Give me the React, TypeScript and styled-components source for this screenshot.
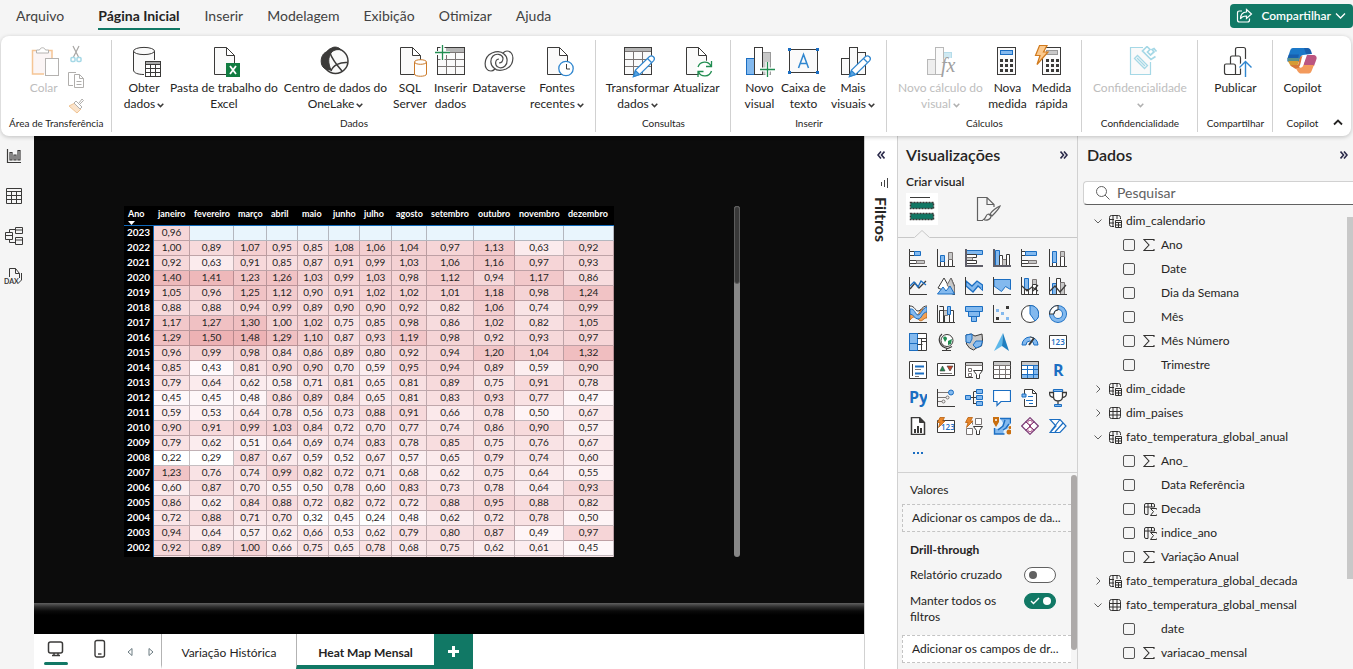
import React from 'react';
import styled, { createGlobalStyle } from 'styled-components';

const GREEN = '#117865';
const INK = '#252423';
const LINE = '#d1d1d1';
const PANE = '#f5f5f5';

const Global = createGlobalStyle`
  * { box-sizing: border-box; }
  body { margin: 0; background: ${PANE}; color: ${INK}; font: 12px/16px Lato, "Open Sans", sans-serif; }
  button, input { font: inherit; color: inherit; }
  button { background: none; border: 0; padding: 0; cursor: pointer; }
  svg { display: block; flex: none; }
`;

/* ---------- shell ---------- */
const Page = styled.div`
  display: flex;
  flex-direction: column;
  height: 100vh;
  min-height: 600px;
  min-width: 1280px;
  overflow: hidden;
`;
const MenuBar = styled.nav`
  display: flex;
  align-items: flex-start;
  height: 36px;
  padding: 4px 0 0 16px;
`;
const MenuItem = styled.button<{ $active?: boolean }>`
  height: 26px;
  margin-right: ${p => (p.$active ? 25 : 24)}px;
  font-size: 14px;
  line-height: 24px;
  color: ${p => (p.$active ? INK : '#424242')};
  font-weight: ${p => (p.$active ? 700 : 400)};
  border-bottom: 2px solid ${p => (p.$active ? GREEN : 'transparent')};
  &:first-child { margin-right: 34px; }
`;
const ShareButton = styled.button`
  display: flex;
  align-items: center;
  gap: 8px;
  height: 24px;
  margin-left: auto;
  padding: 0 7px 0 6px;
  border-radius: 4px;
  background: ${GREEN};
  color: #fff;
  font-weight: 600;
  svg:last-child { margin-left: -4px; }
`;

/* ---------- ribbon ---------- */
const Ribbon = styled.header`
  position: relative;
  z-index: 1;
  display: flex;
  height: 100px;
  flex: none;
  margin: 0 2px 0 1px;
  padding: 4px 0;
  background: #fff;
  border-radius: 8px;
  box-shadow: 0 1px 4px rgba(0, 0, 0, 0.22);
`;
const Group = styled.section`
  display: flex;
  flex-direction: column;
  justify-content: space-between;
  padding: 5px 8px 1px;
  border-right: 1px solid ${LINE};
  &:last-of-type { border-right: 0; }
`;
const GroupRow = styled.div`
  display: flex;
  justify-content: center;
`;
const GroupName = styled.div`
  font-size: 10px;
  line-height: 16px;
  text-align: center;
  white-space: nowrap;
`;
const Tool = styled.button<{ $w: number }>`
  display: flex;
  flex-direction: column;
  align-items: center;
  width: ${p => p.$w}px;
  gap: 3px;
  line-height: 16px;
  white-space: nowrap;
  &:disabled { color: #bdbdbd; }
`;
const ToolLabel = styled.span`
  display: block;
  svg { display: inline-block; margin-left: 2px; }
`;
const SmallTools = styled.div`
  display: flex;
  flex-direction: column;
  gap: 8px;
  padding: 0 2px 0 7px;
`;
const Collapse = styled.button`
  align-self: flex-end;
  margin: 0 8px 6px auto;
`;

/* ---------- workspace ---------- */
const Workspace = styled.div`
  flex: 1;
  min-height: 0;
  display: grid;
  grid-template-columns: 34px minmax(0, 1fr) 33px 181px 275px;
`;
const Rail = styled.nav`
  display: flex;
  flex-direction: column;
  gap: 20px;
  padding: 10px 0 0 3px;
`;
const RailButton = styled.button`
  width: 22px;
  height: 20px;
  display: grid;
  place-items: center;
`;
const Report = styled.main`
  display: flex;
  flex-direction: column;
  min-width: 0;
  min-height: 0;
`;
const Canvas = styled.div`
  flex: 1;
  min-height: 0;
  display: flex;
  align-items: flex-start;
  justify-content: space-between;
  padding: 70px 124px 0 90px;
  background: #0c0c0c;
  overflow: hidden;
`;
const CanvasFoot = styled.div`
  height: 31px;
  flex: none;
  background: linear-gradient(#606060, #2c2c2c 4px, #0a0a0a 8px, #000 12px);
`;
const Matrix = styled.table`
  table-layout: fixed;
  width: 490px;
  border-collapse: separate;
  border-spacing: 0;
  background: #000;
  color: #fff;
  th, td { padding: 0; overflow: hidden; vertical-align: top; }
  thead th {
    height: 20px;
    padding-left: 4px;
    border-bottom: 1px solid #1068b8;
    text-align: left;
    font-size: 9px;
    line-height: 16px;
    font-weight: 700;
  }
  tbody th {
    border-right: 1px solid #1068b8;
    font-size: 10px;
    line-height: 13px;
    font-weight: 700;
    text-align: center;
  }
  td {
    height: 15px;
    border: 0 solid rgba(60, 40, 50, 0.3);
    border-width: 0 1px 1px 0;
    text-align: center;
    font-size: 10px;
    line-height: 13px;
    color: ${INK};
  }
  svg { margin-top: -1px; }
`;
const Col = styled.col<{ $w: number }>`width: ${p => p.$w}px;`;
const PartialRow = styled.tr`
  td { height: 1px; background: #fbe9eb; border-bottom: 0; }
`;
const CanvasScroll = styled.div`
  width: 6px;
  height: 351px;
  border-radius: 3px;
  background: #878787;
`;
const CanvasThumb = styled.div`
  height: 78px;
  border-radius: 3px;
  border: 1px solid #5c5c5c;
  background: #383838;
`;
const TabBar = styled.footer`
  display: flex;
  height: 35px;
  flex: none;
  background: #fff;
`;
const DeviceButton = styled.button<{ $active?: boolean }>`
  width: 44px;
  padding: 5px 10px 0;
  display: flex;
  flex-direction: column;
  align-items: center;
  gap: 4px;
  &::after {
    content: '';
    width: 24px;
    height: 3px;
    border-radius: 2px;
    background: ${p => (p.$active ? GREEN : 'transparent')};
  }
`;
const Pager = styled.div`
  display: flex;
  align-items: center;
  gap: 15px;
  padding: 0 7px 0 5px;
`;
const PageTab = styled.button<{ $active?: boolean }>`
  width: ${p => (p.$active ? 138 : 135)}px;
  padding-top: 6px;
  border-left: 1px solid #b3b3b3;
  border-bottom: 4px solid ${p => (p.$active ? GREEN : '#fff')};
  font-weight: ${p => (p.$active ? 700 : 400)};
`;
const AddPage = styled.button`
  display: grid;
  place-items: center;
  width: 39px;
  background: ${GREEN};
`;

/* ---------- side panes ---------- */
const FilterPane = styled.aside`
  display: flex;
  flex-direction: column;
  align-items: center;
  gap: 18px;
  padding-top: 15px;
  background: #fff;
  border-left: 1px solid ${LINE};
`;
const FilterName = styled.div`
  writing-mode: vertical-rl;
  font-size: 16px;
  line-height: 20px;
  font-weight: 700;
  margin-top: -10px;
`;
const VisualPane = styled.aside`
  display: flex;
  flex-direction: column;
  min-height: 0;
  border: 1px solid ${LINE};
  border-width: 0 1px;
`;
const PaneHead = styled.div<{ $edge?: boolean }>`
  display: flex;
  align-items: center;
  justify-content: space-between;
  padding: ${p => (p.$edge ? '8px 5px 0 9px' : '8px 9px 0 8px')};
`;
const PaneTitle = styled.h2`
  margin: 0;
  font-size: 16px;
  line-height: 22px;
  font-weight: 600;
`;
const BuildLabel = styled.div`
  padding: 8px 8px 0;
  font-weight: 600;
`;
const BuildTabs = styled.div`
  display: flex;
  gap: 34px;
  padding: 3px 8px 0;
`;
const BuildTab = styled.button<{ $active?: boolean }>`
  display: grid;
  place-items: center;
  width: 32px;
  height: 32px;
  background: ${p => (p.$active ? '#fff' : 'none')};
`;
const Notch = styled.div`
  display: flex;
  align-items: flex-end;
  height: 13px;
  &::before { content: ''; width: 15px; border-bottom: 1px solid #c8c8c8; }
  &::after { content: ''; flex: 1; border-bottom: 1px solid #c8c8c8; }
`;
const Gallery = styled.div`
  display: grid;
  grid-template-columns: repeat(6, 28px);
  grid-auto-rows: 28px;
  padding: 6px 0 0 6px;
  height: 234px;
  flex: none;
`;
const GalleryButton = styled.button`
  display: grid;
  place-items: center;
`;
const Wells = styled.div`
  flex: 1;
  min-height: 0;
  display: flex;
  overflow: hidden;
  border-top: 1px solid ${LINE};
`;
const WellList = styled.div`
  flex: 1;
  min-width: 0;
  padding-left: 4px;
`;
const WellTitle = styled.div<{ $bold?: boolean }>`
  padding: ${p => (p.$bold ? '10px 0 9px 8px' : '9px 0 6px 8px')};
  font-weight: ${p => (p.$bold ? 700 : 400)};
`;
const DropZone = styled.div<{ $filled?: boolean }>`
  height: 28px;
  padding-left: 9px;
  line-height: 26px;
  border: 1px dashed #c4c4c4;
  border-right-width: 0;
  background: ${p => (p.$filled ? '#fff' : '#f7f7f7')};
  white-space: nowrap;
`;
const SwitchRow = styled.label`
  display: flex;
  align-items: flex-start;
  justify-content: space-between;
  padding: 0 15px 10px 8px;
`;
const SwitchText = styled.span`width: 96px;`;
const Switch = styled.span`
  position: relative;
  display: block;
  width: 32px;
  height: 16px;
  svg { position: absolute; left: 6px; top: 4px; pointer-events: none; }
`;
const SwitchInput = styled.input`
  appearance: none;
  display: flex;
  align-items: center;
  width: 32px;
  height: 16px;
  margin: 0;
  padding: 0 4px;
  border: 1px solid #616161;
  border-radius: 8px;
  background: #fff;
  &::before { content: ''; width: 8px; height: 8px; border-radius: 50%; background: #616161; }
  &:checked { background: ${GREEN}; border-color: ${GREEN}; justify-content: flex-end; }
  &:checked::before { background: #fff; }
`;
const WellScroll = styled.div`
  width: 6px;
  height: 175px;
  margin-top: 2px;
  border-radius: 3px;
  background: #adaaa9;
`;
const DataPane = styled.aside`
  display: flex;
  flex-direction: column;
  min-height: 0;
  min-width: 0;
`;
const SearchBox = styled.label`
  display: flex;
  align-items: center;
  gap: 7px;
  height: 24px;
  flex: none;
  margin: 15px 0 4px 5px;
  padding-left: 12px;
  border: 1px solid ${LINE};
  border-bottom-color: #616161;
  border-right: 0;
  border-radius: 4px 0 0 4px;
  background: #fff;
`;
const SearchInput = styled.input`
  width: 100%;
  min-width: 0;
  border: 0;
  padding: 0;
  background: none;
  outline: 0;
  font-size: 14px;
  &::placeholder { color: #616161; opacity: 1; }
`;
const TreeArea = styled.div`
  display: flex;
  flex: 1;
  min-height: 0;
  overflow: hidden;
`;
const Tree = styled.ul`
  flex: 1;
  margin: 0;
  padding: 0;
  list-style: none;
`;
const Fields = styled.ul`
  margin: 0;
  padding: 0;
  list-style: none;
`;
const TableRow = styled.button`
  display: flex;
  align-items: center;
  height: 24px;
  padding-left: 16px;
  svg + svg { margin: 0 4px 0 6px; }
`;
const FieldRow = styled.label`
  display: flex;
  align-items: center;
  height: 24px;
  padding-left: 45px;
`;
const FieldIcon = styled.span`
  width: 14px;
  margin: 0 4px 0 8px;
`;
const Tick = styled.input`
  appearance: none;
  width: 12px;
  height: 12px;
  margin: 0;
  border: 1px solid #555;
  border-radius: 2px;
`;
const TreeScroll = styled.div`
  width: 6px;
  height: 362px;
  margin-top: 8px;
  background: #c8c8c8;
`;

/* ---------- icon drawing ---------- */
const K = '#3b3a39';
const B = '#1b6ec2';
const L = '#83b9ee';
const G = '#c8c8c8';
const N = '#7a7574';

const Chevron = ({ color = K }: { color?: string }) => (
  <svg width="7" height="5" viewBox="0 0 7 5" fill="none" stroke={color} strokeWidth="1.5"><path d="M.7.8 3.5 3.6 6.3.8" /></svg>
);
const DoubleChevron = ({ left }: { left?: boolean }) => (
  <svg width="8" height="8" viewBox="0 0 8 8" fill="none" stroke="#2b2a4a" strokeWidth="1.6">
    {left ? <path d="M4 .5 1 4l3 3.5M7.5.5l-3 3.5 3 3.5" /> : <path d="M.5.5l3 3.5-3 3.5M4 .5 7 4 4 7.5" />}
  </svg>
);

const Icon32 = ({ children, s = K }: { children: React.ReactNode; s?: string }) => (
  <svg width="32" height="32" viewBox="0 0 32 32" fill="none" stroke={s} overflow="visible">{children}</svg>
);
const doc = <path d="M6.500 2.500H18.500L26.500 10.500V29.500H6.500zM18.500 2.500V10.500H26.500" fill="#fafafa" />;
const pencil = (
  <g stroke="#2f86cf" strokeWidth="1.2">
    <path d="M12.500 31.500l2-6.500L28.500 11.500a3 3 0 0 1 4.200 4.200L18.700 29.500z" fill="#fff" />
    <path d="M12.500 31.500l2-6 4 4z" fill="#5aa5e2" /><path d="M26.500 13.500l4 4" />
  </g>
);
const keys = (x: number) => (
  <g fill={K} stroke="none">
    {[0, 1, 2].map(r => [0, 1, 2].map(c => <rect key={`${r}${c}`} x={x + c * 5} y={14 + r * 5} width="3" height="3" />))}
  </g>
);

const ribbonIcons: Record<string, React.ReactNode> = {
  paste: <Icon32 s="#b4b2b0"><path d="M4 5h20v9h-7v15H4z" fill="#fbf5f5" stroke="none" /><path d="M8 5.500H4.500v23.500H16M20 5.500h4v8" stroke="#f5c595" strokeWidth="1.500" /><path d="M8.500 8V5h3c1-3 5-3 6 0h3v3z" fill="#fff" /><rect x="17.500" y="13.500" width="13" height="17" fill="#fff" /></Icon32>,
  database: <Icon32><path d="M5.500 6c0-5 21-5 21 0v10h-10v13.500c-6 0-11-1.500-11-4.500z" fill="#fafafa" stroke="none" /><path d="M16 29.500c-6 0-10.500-1.500-10.500-4.500V6M26.500 6v9" /><ellipse cx="16" cy="6" rx="10.500" ry="3.600" fill="#fafafa" /><rect x="17.500" y="16.500" width="15" height="15" fill="#fff" /><path d="M18 17h14v2H18z" fill="#a8a8a8" stroke="none" /><path d="M17.500 19.500h15M17.500 23.500h15M17.500 27.500h15M22.500 20v11M27.500 20v11" /></Icon32>,
  excel: <Icon32>{doc}<rect x="18" y="18" width="14" height="14" fill="#107c41" stroke="none" /><path d="M22 21l6 8M28 21l-6 8" stroke="#fff" strokeWidth="1.800" /></Icon32>,
  onelake: <Icon32><circle cx="16.500" cy="16" r="12.500" fill="#fafafa" strokeWidth="1.500" /><path d="M12 3.500C15 1 20 2 22 5c-4-1-8 0-10 3-3 5-3 10 0 17-4 0-8-1-9.500-6C1 12 5 7 8 7c1-2 2-3 4-3.500z" fill={K} /><path d="M11 8c2 6 5 10 12 18M12 26c2-6 9-9 16.500-8.500" strokeWidth="1.500" /></Icon32>,
  sql: <Icon32>{doc}<path d="M20.500 17v12c0 3 12 3 12 0V17" fill="#fff" stroke="#cc7a29" /><ellipse cx="26.500" cy="17" rx="6" ry="2.300" fill="#fff" stroke="#cc7a29" /></Icon32>,
  grid: <Icon32><rect x="3.500" y="2.500" width="27" height="27" fill="#fafafa" /><path d="M12 3h18v4H12z" fill="#b5b5b5" stroke="none" /><path d="M4 14.500h26M4 21.500h26M12.500 7v22M21.500 7v22M4 7.500h26" stroke={N} /><path d="M1 8h15M8.500 1v14" stroke="#fff" strokeWidth="4" /><path d="M1 7.500h15M8.500 0v15" stroke="#218d51" strokeWidth="1.300" /></Icon32>,
  dataverse: <Icon32><g strokeWidth="1.200" stroke="#4a4a4a"><path d="M8 26C0 26 0 12 9 8c5-2 9-2 12 1 4 3 4 9 1 12-3 3-8 2-9-1s0-6 3-6" /><path d="M24 6c8 0 8 14-1 18-5 2-9 2-12-1-4-3-4-9-1-12 3-3 9-2 10 2 0 3-1 5-4 5" /><path d="M20 8c2-2 3-2 4-2M12 24c-2 2-3 2-4 2" /></g></Icon32>,
  recent: <Icon32>{doc}<circle cx="25" cy="23.500" r="7.200" fill="#fff" stroke="#2f86cf" strokeWidth="1.300" /><path d="M25.500 19v5H29" /></Icon32>,
  transform: <Icon32><rect x="3.500" y="2.500" width="27" height="27" fill="#fafafa" /><path d="M4 3h26v3H4z" fill="#b5b5b5" stroke="none" /><path d="M4 6.500h26M4 14.500h26M4 21.500h26M12.500 7v22M21.500 7v22" stroke={N} />{pencil}</Icon32>,
  refresh: <Icon32>{doc}<circle cx="25" cy="24" r="8.500" fill="#fff" stroke="none" /><path d="M18 22a7 7 0 0 1 13-1M31.500 26a7 7 0 0 1-13 1M31.500 16v5.500H26M18 32v-5.500h5.500" stroke="#218d51" strokeWidth="1.300" /></Icon32>,
  newVisual: <Icon32><rect x="3.500" y="13.500" width="8" height="16" fill={L} stroke={B} /><rect x="19.500" y="7.500" width="8" height="22" fill={G} stroke="#9a9a9a" /><rect x="11.500" y="2.500" width="8" height="27" fill="#fff" /><path d="M17 24.500h14M24.500 17v15" stroke="#fff" strokeWidth="4" /><path d="M17 24.500h15M24.500 17v15" stroke="#218d51" strokeWidth="1.300" /></Icon32>,
  textBox: <Icon32><rect x="2.500" y="4.500" width="28" height="23" fill="#fafafa" /><path d="M1 3h3v3H1zM29 3h3v3h-3zM1 26h3v3H1zM29 26h3v3h-3z" fill={B} stroke="none" /><path d="M11.500 23L16.500 9.500 21.500 23M13 18.500h7" stroke="#2f86cf" strokeWidth="1.500" /></Icon32>,
  moreVisuals: <Icon32><rect x="4.500" y="13.500" width="8" height="16" fill="#fafafa" /><rect x="20.500" y="7.500" width="8" height="22" fill="#fafafa" /><rect x="12.500" y="2.500" width="8" height="27" fill="#fafafa" />{pencil}</Icon32>,
  calc: <Icon32 s="#b8b8b8"><rect x="3.500" y="14.500" width="8" height="15" fill="#eee" /><rect x="19.500" y="7.500" width="8" height="22" fill="#cfe9f2" stroke="#b5dcea" /><rect x="11.500" y="2.500" width="8" height="27" fill="#fafafa" /><path d="M20 13h12v18H18z" fill="#fff" stroke="none" /><text x="17" y="27" fontFamily="Liberation Serif, serif" fontStyle="italic" fontSize="20" fill="#a0a0a0" stroke="none">fx</text></Icon32>,
  measure: <Icon32><rect x="6.500" y="2.500" width="18" height="27" fill="#fafafa" /><rect x="9.500" y="5.500" width="12" height="4" fill={L} stroke={B} />{keys(9)}</Icon32>,
  quick: <Icon32><rect x="7.500" y="2.500" width="18" height="27" fill="#fafafa" /><rect x="11.500" y="5.500" width="11" height="4" fill={G} stroke="#999" />{keys(11)}<path d="M4.500.500H12L8.500 7H13L2 19.500l3-9H.500z" fill="#fbc98d" stroke="#d17a1d" strokeWidth="1.200" /></Icon32>,
  sensitivity: <Icon32 s="#a5d8e6"><path d="M19 2.500H6.500V29.500H26.500V17" fill="#fafafa" strokeWidth="1.200" /><path d="M23 1.500l-4.500 4.500 8.500 8.500 4.500-3M23 1.500l3 3-2.500 2.500 3 3L30 7l-2-2.500 2-1 2.500 3" strokeWidth="1.700" /><path d="M10.500 13.500l3-3 10 10-3 3zM13 13l8 8" strokeWidth="1.300" /></Icon32>,
  publish: <Icon32><path d="M16.500 29.500h-9q-2 0-2-2v-7q0-1.500 1.500-1.500h7.500q2 0 2 2v8.500h5M11.500 19v-6.500q0-1.500 1.500-1.500h7q1.500 0 1.500 2v16.500M16.500 11V4.500q0-2 2-2h6q2 0 2 2V14" strokeWidth="1.200" /><path d="M26.500 32V17M20.500 22.500l6-6 6 6" stroke="#fff" strokeWidth="4" /><path d="M26.500 32V17M20.500 22.500l6-6 6 6" stroke="#2f86cf" strokeWidth="1.400" /></Icon32>,
  copilot: <Icon32><g stroke="none"><path d="M7 3h13c3 0 4 2 5 6l-8 1c-2 0-3 3-4 7H3C1 17 1 15 2 12l2-6c.500-2 1.500-3 3-3z" fill="#1b78c8" /><path d="M3 9.500h10l-1 4H1.500zM22 3c2 0 3 2 4 6h-6L18 3z" fill="#185fae" /><path d="M1.500 13h12l-1 3H2z" fill="#59908b" /><path d="M2 16h11l-2 6H8c-3 0-4-2-6-6z" fill="#d59b36" /><path d="M4 20h8l2-8 4-2-3 12c-1 4-5 2-7 1z" fill="#d7773b" /><path d="M20 10h7c3 0 4 2 3.500 4L28 21H17z" fill="#bb5580" /><path d="M16 20h12l-2 5c-1 3-2 3.500-5 3.500h-7c-2-1-3-3-4-5.500 3 0 5 0 6-3z" fill="#f39a5c" /><path d="M17 10h4l-4 11c-1 2-3 2-4 1 2-2 2-9 4-12z" fill="#fff" /></g></Icon32>,
};

const smallIcons = [
  <svg key="cut" width="16" height="18" viewBox="0 0 16 18" fill="none" stroke="#a8a6a4" strokeWidth="1.200"><path d="M5 1l5.500 11M11 1L5.500 12" /><rect x="3" y="12.500" width="4" height="4" rx="1" stroke="#a5d8e6" strokeWidth="1.500" /><rect x="9" y="12.500" width="4" height="4" rx="1" stroke="#a5d8e6" strokeWidth="1.500" /></svg>,
  <svg key="copy" width="16" height="18" viewBox="0 0 16 18" fill="none" stroke="#b0aeac"><path d="M5 14.500H.500V1.500H8M6.500 3.500h5l4 4v9h-9zM11.500 3.500v4h4M8.500 10.500h5M8.500 13.500h5" /></svg>,
  <svg key="brush" width="16" height="18" viewBox="0 0 16 18" fill="none" stroke="#b0aeac"><path d="M1 9l6-3 6 6-4 4z" fill="#fae3cb" stroke="#f0c493" /><path d="M6 6l2-2 6 6-2 2zM11 6l3-4 1.500 1.500L12 7" fill="#fff" /></svg>,
];

const railIcons = [
  <svg key="r" width="16" height="16" viewBox="0 0 16 16" fill="none" stroke={K} strokeWidth="1.200"><path d="M1.500 1v13.500H15M4 4.500h2v7.500H4zM8 7h2v5H8zM12 2.500h2V12h-2z" /></svg>,
  <svg key="t" width="16" height="16" viewBox="0 0 16 16" fill="none" stroke={K}><path d="M.500.500h15v15H.500zM.500 3.500h15M.500 7.500h15M.500 11.500h15M5.500 3.500v12M10.500 3.500v12" /></svg>,
  <svg key="m" width="18" height="18" viewBox="0 0 18 18" fill="none" stroke={K}><path d="M.500 5.500h7v7h-7zM.500 8.500h7M10.500.500h7v6h-7zM10.500 3h7M10.500 10.500h7v7h-7zM10.500 13h7M4.500 5V2.500h6M4.500 13v2.500h6" /></svg>,
  <svg key="d" width="20" height="18" viewBox="0 0 20 18" fill="none" stroke={K}><path d="M5.500 10V1.500h6l4 5V11M11.500 1.500v5h4M17.500 6v7l-3 3" /><text x="0" y="17" fontFamily="Lato, sans-serif" fontSize="7" fontWeight="700" fill={K} stroke="none">DAX</text></svg>,
];

const axes = <path d="M.500 0V17.500H18" stroke={K} />;
const txt = (t: string, x: number, y: number, size: number, weight = 700) => (
  <text x={x} y={y} fontFamily="Open Sans, sans-serif" fontWeight={weight} fontSize={size} fill={B} stroke="none">{t}</text>
);
const funnel = <path d="M8.500 9.500h9l-3 4v4h-3v-4z" fill="#fff" stroke={K} />;
const bolt = <path d="M3 .500h4.500L5.500 4H8L1.500 10.500l1.500-5H.500z" fill="#e8862a" stroke="#b8600e" strokeWidth=".8" />;

const gallery: [string, React.ReactNode][] = [
  ['Barras empilhadas', <>{axes}<path d="M.500 2.500h5v4h-5zM.500 11.500h7v3h-7z" fill="#fff" stroke={K} /><path d="M5.500 2.500h6v4h-6z" fill={L} stroke={B} /><path d="M7.500 11.500h8v3h-8z" fill={G} stroke={N} /></>],
  ['Colunas empilhadas', <>{axes}<path d="M3.500 12.500h4v5h-4zM11.500 10.500h4v7h-4z" fill="#fff" stroke={K} /><path d="M3.500 6.500h4v6h-4z" fill={L} stroke={B} /><path d="M11.500 3.500h4v7h-4z" fill={G} stroke={N} /></>],
  ['Barras clusterizadas', <><path d="M.500 1.500h17v4H.500z" fill={L} stroke={B} /><path d="M.500 5.500h11v3H.500z" fill="#fff" stroke={K} /><path d="M.500 8.500h7v3h-7z" fill={G} stroke={N} /><path d="M.500 11.500h11v3H.500z" fill="#fff" stroke={K} /><path d="M1 0v17H18" stroke="#5f5e68" strokeWidth="2" /></>],
  ['Colunas clusterizadas', <><path d="M2.500 1.500h4v16h-4z" fill={L} stroke={B} /><path d="M6.500 6.500h3v11h-3z" fill="#fff" stroke={K} /><path d="M9.500 10.500h4v7h-4z" fill={G} stroke={N} /><path d="M13.500 5.500h3v12h-3z" fill="#fff" stroke={K} /><path d="M1 0v17H18" stroke="#5f5e68" strokeWidth="2" /></>],
  ['Barras 100%', <>{axes}<path d="M.500 2.500h4v4h-4zM.500 11.500h7v3h-7z" fill="#fff" stroke={K} /><path d="M4.500 2.500h11v4h-11z" fill={L} stroke={B} /><path d="M7.500 11.500h8v3h-8z" fill={G} stroke={N} /></>],
  ['Colunas 100%', <>{axes}<path d="M3.500 13.500h4v4h-4zM11.500 7.500h4v10h-4z" fill="#fff" stroke={K} /><path d="M3.500 2.500h4v11h-4z" fill={L} stroke={B} /><path d="M11.500 2.500h4v5h-4z" fill={G} stroke={N} /></>],
  ['Linhas', <>{axes}<path d="M1 12l5-6 4 5 7-7" stroke={K} strokeWidth="1.300" /><path d="M1 9l4-4 4 5 3-6 5 4" stroke={B} strokeWidth="1.300" /></>],
  ['Área', <><path d="M1 11L7 1l4 7 3-7 4 9v8z" fill="#fff" stroke={K} /><path d="M10 8l4-7 3.500 9v7z" fill={G} stroke={N} /><path d="M.500 17L6 10l3 4 4-5 4.500 8z" fill={L} stroke={B} /></>],
  ['Área empilhada', <><path d="M1 4l6 5 5-5 5.500 4v5L13 9l-5 6-7-6z" fill={L} stroke={B} strokeWidth="1.300" />{axes}</>],
  ['Área 100%', <><path d="M1 2.500h16.500v10l-5-3-4 5L1 9z" fill={L} stroke={B} />{axes}</>],
  ['Linha e coluna empilhada', <><path d="M3.500 1.500h4v16h-4z" fill={L} stroke={B} /><path d="M11.500 2.500h4v5h-4z" fill={G} stroke={N} /><path d="M11.500 7.500h4v10h-4zM3.500 12.500h4v5h-4z" fill="#fff" stroke={K} /><path d="M1 9l5 5 5-4 6 4M12 14l5-6" stroke={K} strokeWidth="1.200" />{axes}</>],
  ['Linha e coluna clusterizada', <><path d="M3.500 6.500h4v11h-4z" fill={L} stroke={B} /><path d="M7.500 1.500h4v16h-4z" fill="#fff" stroke={K} /><path d="M11.500 5.500h4v12h-4z" fill={G} stroke={N} /><path d="M1 14l5-5 5 6 6-7" stroke={K} strokeWidth="1.200" />{axes}</>],
  ['Faixa de opções', <><path d="M1 10c4-6 6 4 9-2s5-4 8-3v8c-3-1-5 5-8 2s-5-5-9 0z" fill="#f2a154" stroke="#b8600e" strokeWidth=".8" /><path d="M1 4c5-1 5 6 8 6s4-7 9-8v5c-5 0-5 7-9 7s-4-5-8-5z" fill={L} stroke={B} /><path d="M1 1c5 0 5 5 8 5s4-5 9-5" stroke={K} />{axes}</>],
  ['Cascata', <>{axes}<path d="M2.500 5.500h5v12h-5zM12.500 5.500h4v12h-4z" fill="#fff" stroke={K} /><path d="M6.500 5.500h4v5h-4z" fill={G} stroke={N} /><path d="M10.500 1.500h3v8h-3z" fill={L} stroke={B} /><path d="M2.500 1.500h4v16" stroke={K} /></>],
  ['Funil', <path d="M.500 1.500h17v5H.500zM3.500 6.500h11v5h-11zM6.500 11.500h5v5h-5z" fill={L} stroke={B} />],
  ['Dispersão', <>{axes}<path d="M13 1h3v3h-3zM3 12h3v3H3z" fill={K} stroke="none" /><path d="M3 4h3v3H3zM8 7h3v3H8zM13 12h3v3h-3z" fill={L} stroke="none" /></>],
  ['Pizza', <><circle cx="9" cy="9" r="8.500" fill="#fff" stroke={K} /><path d="M9 9V.500A8.500 8.500 0 0 1 14 16z" fill={L} stroke={B} /></>],
  ['Rosca', <><circle cx="9" cy="9" r="6.500" stroke={B} strokeWidth="5" /><circle cx="9" cy="9" r="6.500" stroke={L} strokeWidth="3.200" /><path d="M2.500 9A6.500 6.500 0 0 1 9 2.500" stroke="#fff" strokeWidth="3.500" /><path d="M.500 9A8.500 8.500 0 0 1 9 .500M5 9a4 4 0 0 1 4-4M0 9h5M9 0v5" stroke={K} /></>],
  ['Treemap', <><path d="M.500.500h17v17H.500z" fill="#fff" stroke={K} /><path d="M.500.500h8v17h-8z" fill={L} stroke={B} /><path d="M.500 10.500h8" stroke={B} /><path d="M8.500 5.500h9M8.500 11.500h5M12.500 5.500v12M13 8.500h4" stroke={K} /></>],
  ['Mapa', <><circle cx="10" cy="7.500" r="6" fill="#fff" stroke={K} /><path d="M6 5c2-3 4-1 4 1l-2 3zM11 8l4-2-1 5-3 1z" fill="#218d51" stroke="none" /><path d="M5 1C0 5 2 14 11 15.500l4-2M9.500 15v2M5 17.500h9" stroke={K} strokeWidth="1.200" /></>],
  ['Mapa coroplético', <><path d="M1 2l5-1 4 2 7-2 .500 6-1 6-5 2-3 2-4-2-3-4z" fill={G} stroke={K} /><path d="M1 2l6-1v5l-2 4-4-1zM8 12l3-4h6.500l-1.500 5-5 2z" fill={L} stroke={B} /></>],
  ['Mapa do Azure', <><path d="M10 0L1 18l8-5z" fill="#5db8ea" stroke="none" /><path d="M10 0l6 18-7-5z" fill="#1f7fc0" stroke="none" /></>],
  ['Medidor', <><path d="M1 12a8 8 0 0 1 16 0h-4a4 4 0 0 0-8 0z" fill={L} stroke={B} /><path d="M9 4a8 8 0 0 1 4 1.500l-3 3.500" fill="#fff" stroke={K} /><path d="M8 12l5-7" stroke={K} strokeWidth="2" /></>],
  ['Cartão', <><path d="M.500 2.500h17v13H.500z" fill="#fff" stroke={K} />{txt('123', 2, 12, 8, 600)}</>],
  ['Cartão de várias linhas', <><path d="M.500.500h17v17H.500z" fill="#fff" stroke={K} /><path d="M3.500 3v12" stroke={K} /><path d="M6 5.500h9M6 12.500h9" stroke={B} strokeWidth="2" /><path d="M6 8.500h6M6 15.500h4" stroke={N} /></>],
  ['KPI', <><path d="M.500 2.500h17v12H.500z" fill="#fff" stroke={K} /><path d="M3 10l2.500-5L8 10z" fill="#218d51" stroke={K} strokeWidth=".6" /><path d="M10 5h6l-3 5z" fill="#c4452c" stroke={K} strokeWidth=".6" /><path d="M3 12.500h12" stroke={N} /></>],
  ['Segmentação', <><path d="M.500 1.500h17v15H.500z" fill="#fff" stroke={K} /><path d="M1 2h16v2H1z" fill={G} stroke="none" /><path d="M.500 4.500h17M3.500 7.500h3v3h-3zM3.500 12.500h3v3h-3z" stroke={N} /><path d="M8 9h10v9H8z" fill={PANE} stroke="none" />{funnel}</>],
  ['Tabela', <><path d="M.500.500h17v17H.500z" fill="#fff" stroke={K} /><path d="M1 1h16v3H1z" fill={G} stroke="none" /><path d="M.500 4.500h17M.500 8.500h17M.500 13.500h17M6.500 5v12M12.500 5v12" stroke={N} /></>],
  ['Matriz', <><path d="M.500.500h17v17H.500z" fill="#fff" stroke={K} /><path d="M1 1h16v3H1z" fill={G} stroke="none" /><path d="M12 5h6v13H0v-5h12z" fill={L} stroke="none" /><path d="M.500 4.500h17M.500 8.500h17M.500 13.500h17M6.500 5v12M12.500 5v12" stroke={B} /><path d="M.500.500h17v17H.500z" stroke={K} /></>],
  ['Visual do R', txt('R', 4, 15, 16)],
  ['Visual do Python', txt('Py', 0, 14, 16)],
  ['Influenciadores', <>{axes}<path d="M1 3.500h11M1 8.500h8M1 12.500h4" stroke={N} /><circle cx="14" cy="3.500" r="2.500" fill={L} stroke={B} /><circle cx="10.500" cy="8.500" r="1.500" stroke={N} /><circle cx="6.500" cy="12.500" r="1.500" stroke={N} /></>],
  ['Árvore hierárquica', <><path d="M5 8.500h6M8.500 3v12M8.500 2.500H12M8.500 14.500H12" stroke={K} /><path d="M.500 6.500h5v4h-5zM11.500.500h6v4h-6zM11.500 6.500h6v4h-6zM11.500 12.500h6v4h-6z" fill={L} stroke={B} /></>],
  ['P e R', <path d="M.500 1.500h17v11H8l-4 4v-4H.500z" fill="#fff" stroke={B} strokeWidth="1.200" />],
  ['Narrativa', <><path d="M3.500 5V.500h8l4 4v13h-12V10" fill="#fff" stroke={K} /><path d="M11.500.500v4h4" stroke={K} /><path d="M1 5h4v3H1z" fill={L} stroke={B} /><path d="M7 7.500h5M5 11.500h7M8 14.500h4" stroke={B} /></>],
  ['Metas', <><path d="M4.500 1.500h9v6c0 6-9 6-9 0zM4.500 3.500h-4c0 4 2 5 4 5M13.500 3.500h4c0 4-2 5-4 5M9 12v3" fill="#fff" stroke={K} strokeWidth="1.300" /><path d="M4.500.500h9v2h-9zM5.500 15.500h7v2h-7z" fill={L} stroke={B} /></>],
  ['Relatório paginado', <><path d="M2.500.500h8l5 5v12h-13z" fill="#fff" stroke={K} strokeWidth="1.500" /><path d="M10.500.500v5h5" fill={K} stroke={K} /><path d="M5 12h2v4H5zM8 9h2v7H8zM11 11h2v5h-2z" fill={K} stroke="none" /></>],
  ['Novo cartão', <><path d="M.500 3.500h17v12H.500z" fill="#fff" stroke={K} />{txt('123', 4, 13, 8, 600)}{bolt}</>],
  ['Nova segmentação', <><path d="M10.500 1.500h6v6h-6zM1.500 11.500h6v6h-6zM3.500 5.500h4v2" fill="#fff" stroke={N} />{funnel}{bolt}</>],
  ['ArcGIS', <><path d="M1 1h16v10L13 17H1z" fill="#e4f1fc" stroke="none" /><path d="M7 1h10.500v6l-2 1-1 4-4 1v4H1v-6l3 1 5-2 1-4z" fill={L} stroke="none" /><path d="M7 1.500h10.500v5M1.500 11v6h10M12 3l-2 6-5 4M16 7l-3 4-3 2" stroke={B} strokeWidth="1.400" /><path d="M0 0h6v5l-3 5-3-5z" fill="#c96f10" stroke="none" /><circle cx="3" cy="3" r="1" fill="#fff" stroke="none" /><circle cx="16" cy="15" r="2.500" fill="#c96f10" stroke="none" /><circle cx="17" cy="10.500" r="1.500" fill="#c96f10" stroke="none" /></>],
  ['Power Apps', <><path d="M9 .700L17.300 9 9 17.300.700 9z" fill="#fff" stroke="#7b3a76" strokeWidth="1.200" /><path d="M4.500 4.500L13.500 13.500M13.500 4.500L4.500 13.500" stroke="#7b3a76" /><circle cx="9" cy="5.500" r="2.300" stroke="#a84d83" fill="#fff" /><circle cx="9" cy="12.500" r="2.300" stroke="#a84d83" fill="#fff" /></>],
  ['Power Automate', <><path d="M1 2.500h10l6 6.500-6 6.500H1L7 9z" fill="#fff" stroke={B} strokeWidth="1.200" /><path d="M11 2.500L2 14M14 6l-8 9" stroke={B} strokeWidth="1.200" /></>],
  ['Obter mais visuais', <path d="M4 7h2v2H4zM8 7h2v2H8zM12 7h2v2h-2z" fill={B} stroke="none" />],
];

const TableGlyph = ({ calc }: { calc?: boolean }) => (
  <svg width="14" height="14" viewBox="0 0 14 14" fill="none" stroke="#323130">
    <rect x="1.500" y="1.500" width="11" height="11" rx="2" /><path d="M1.500 5.500h11M1.500 9h11M5 1.500v11M9 1.500v11" />
    {calc && <><path d="M6 5h8v9H6z" fill={PANE} stroke="none" /><path d="M7.500 6.500h6v7h-6zM7.500 8.500h6M7.500 11h6M10.500 8.500v5" /></>}
  </svg>
);
const SigmaGlyph = () => (
  <svg width="12" height="14" viewBox="0 0 12 14" fill="none" stroke="#323130" strokeWidth="1.100"><path d="M11 3V1.500H1L6 7l-5 5.500h10V11" /></svg>
);
const CalcColumnGlyph = () => (
  <svg width="14" height="14" viewBox="0 0 14 14" fill="none" stroke="#323130"><path d="M5 12.500H3q-1.500 0-1.500-1.500V3Q1.500 1.500 3 1.500h7q1.500 0 1.500 1.500v2M1.500 5h10M5 1.500v11M8.500 1.500V5" /><path d="M13.500 7.500v-1h-6l3 3-3 4h6v-1" /></svg>
);
const Caret = ({ open }: { open?: boolean }) => (
  <svg width="8" height="8" viewBox="0 0 8 8" fill="none" stroke="#616161"><path d={open ? 'M.500 2.500L4 6l3.500-3.500' : 'M2.500.500L6 4 2.500 7.500'} /></svg>
);

/* ---------- data ---------- */
type ToolDef = { icon: string; lines: string[]; w: number; menu?: boolean; off?: boolean };
const groups: { name: string; tools: ToolDef[] }[] = [
  { name: 'Dados', tools: [
    { icon: 'database', lines: ['Obter', 'dados'], w: 47, menu: true },
    { icon: 'excel', lines: ['Pasta de trabalho do', 'Excel'], w: 113 },
    { icon: 'onelake', lines: ['Centro de dados do', 'OneLake'], w: 110, menu: true },
    { icon: 'sql', lines: ['SQL', 'Server'], w: 39 },
    { icon: 'grid', lines: ['Inserir', 'dados'], w: 42 },
    { icon: 'dataverse', lines: ['Dataverse'], w: 55 },
    { icon: 'recent', lines: ['Fontes', 'recentes'], w: 61, menu: true },
  ] },
  { name: 'Consultas', tools: [
    { icon: 'transform', lines: ['Transformar', 'dados'], w: 66, menu: true },
    { icon: 'refresh', lines: ['Atualizar'], w: 52 },
  ] },
  { name: 'Inserir', tools: [
    { icon: 'newVisual', lines: ['Novo', 'visual'], w: 40 },
    { icon: 'textBox', lines: ['Caixa de', 'texto'], w: 48 },
    { icon: 'moreVisuals', lines: ['Mais', 'visuais'], w: 51, menu: true },
  ] },
  { name: 'Cálculos', tools: [
    { icon: 'calc', lines: ['Novo cálculo do', 'visual'], w: 90, menu: true, off: true },
    { icon: 'measure', lines: ['Nova', 'medida'], w: 44 },
    { icon: 'quick', lines: ['Medida', 'rápida'], w: 44 },
  ] },
  { name: 'Confidencialidade', tools: [{ icon: 'sensitivity', lines: ['Confidencialidade', ''], w: 99, menu: true, off: true }] },
  { name: 'Compartilhar', tools: [{ icon: 'publish', lines: ['Publicar'], w: 58 }] },
  { name: 'Copilot', tools: [{ icon: 'copilot', lines: ['Copilot'], w: 42 }] },
];

const months: [string, number][] = [
  ['janeiro', 36], ['fevereiro', 44], ['março', 33], ['abril', 31], ['maio', 31], ['junho', 31], ['julho', 32],
  ['agosto', 35], ['setembro', 47], ['outubro', 41], ['novembro', 49], ['dezembro', 50],
];
const rows = `2023 0,96
2022 1,00 0,89 1,07 0,95 0,85 1,08 1,06 1,04 0,97 1,13 0,63 0,92
2021 0,92 0,63 0,91 0,85 0,87 0,91 0,99 1,03 1,06 1,16 0,97 0,93
2020 1,40 1,41 1,23 1,26 1,03 0,99 1,03 0,98 1,12 0,94 1,17 0,86
2019 1,05 0,96 1,25 1,12 0,90 0,91 1,02 1,02 1,01 1,18 0,98 1,24
2018 0,88 0,88 0,94 0,99 0,89 0,90 0,90 0,92 0,82 1,06 0,74 0,99
2017 1,17 1,27 1,30 1,00 1,02 0,75 0,85 0,98 0,86 1,02 0,82 1,05
2016 1,29 1,50 1,48 1,29 1,10 0,87 0,93 1,19 0,98 0,92 0,93 0,97
2015 0,96 0,99 0,98 0,84 0,86 0,89 0,80 0,92 0,94 1,20 1,04 1,32
2014 0,85 0,43 0,81 0,90 0,90 0,70 0,59 0,95 0,94 0,89 0,59 0,90
2013 0,79 0,64 0,62 0,58 0,71 0,81 0,65 0,81 0,89 0,75 0,91 0,78
2012 0,45 0,45 0,48 0,86 0,89 0,84 0,65 0,81 0,83 0,93 0,77 0,47
2011 0,59 0,53 0,64 0,78 0,56 0,73 0,88 0,91 0,66 0,78 0,50 0,67
2010 0,90 0,91 0,99 1,03 0,84 0,72 0,70 0,77 0,74 0,86 0,90 0,57
2009 0,79 0,62 0,51 0,64 0,69 0,74 0,83 0,78 0,85 0,75 0,76 0,67
2008 0,22 0,29 0,87 0,67 0,59 0,52 0,67 0,57 0,65 0,79 0,74 0,60
2007 1,23 0,76 0,74 0,99 0,82 0,72 0,71 0,68 0,62 0,75 0,64 0,55
2006 0,60 0,87 0,70 0,55 0,50 0,78 0,60 0,83 0,73 0,78 0,64 0,93
2005 0,86 0,62 0,84 0,88 0,72 0,82 0,72 0,72 0,88 0,95 0,88 0,82
2004 0,72 0,88 0,71 0,70 0,32 0,45 0,24 0,48 0,62 0,72 0,78 0,50
2003 0,94 0,64 0,57 0,62 0,66 0,53 0,62 0,79 0,80 0,87 0,49 0,97
2002 0,92 0,89 1,00 0,66 0,75 0,65 0,78 0,68 0,75 0,62 0,61 0,45`.split('\n').map(r => r.split(' '));

const heat = (cell?: string) => {
  if (!cell) return '#e9f5fd';
  const d = parseFloat(cell.replace(',', '.')) - 1;
  const c = (base: number, k: number) => Math.min(255, Math.round(base - d * k));
  return `rgb(${c(245, 17)}, ${c(211, 66)}, ${c(213, 66)})`;
};

type Kind = 'sum' | 'calc' | undefined;
const tables: { name: string; calc?: boolean; fields?: [string, Kind?][] }[] = [
  { name: 'dim_calendario', calc: true, fields: [['Ano', 'sum'], ['Date'], ['Dia da Semana'], ['Mês'], ['Mês Número', 'sum'], ['Trimestre']] },
  { name: 'dim_cidade', calc: true },
  { name: 'dim_paises' },
  { name: 'fato_temperatura_global_anual', calc: true, fields: [['Ano_', 'sum'], ['Data Referência'], ['Decada', 'calc'], ['indice_ano', 'calc'], ['Variação Anual', 'sum']] },
  { name: 'fato_temperatura_global_decada', calc: true },
  { name: 'fato_temperatura_global_mensal', fields: [['date'], ['variacao_mensal', 'sum']] },
];

function RibbonTool({ icon, lines, w, menu, off }: ToolDef) {
  return (
    <Tool $w={w} disabled={off}>
      {ribbonIcons[icon]}
      <span>
        {lines.map((t, i) => (
          <ToolLabel key={i}>{t}{menu && i === lines.length - 1 && <Chevron color={off ? '#b0b0b0' : K} />}</ToolLabel>
        ))}
      </span>
    </Tool>
  );
}

export default function App() {
  return (
    <Page>
      <Global />
      <MenuBar>
        {['Arquivo', 'Página Inicial', 'Inserir', 'Modelagem', 'Exibição', 'Otimizar', 'Ajuda'].map((m, i) => (
          <MenuItem key={m} $active={i === 1}>{m}</MenuItem>
        ))}
        <ShareButton>
          <svg width="17" height="16" viewBox="0 0 17 16" fill="none" stroke="#fff" strokeWidth="1.200"><path d="M6 3H3.500Q1.500 3 1.500 5v7q0 2 2 2h8q2 0 2-2v-1.500M10.500 1.500l5 4.500-5 4.500V8C7 8 5.500 9 4.500 11c0-4 2-7 6-7z" /></svg>
          Compartilhar
          <svg width="11" height="8" viewBox="0 0 11 8" fill="none" stroke="#fff" strokeWidth="1.300"><path d="M1 1.500l4.500 4.500L10 1.500" /></svg>
        </ShareButton>
      </MenuBar>

      <Ribbon>
        <Group>
          <GroupRow>
            <RibbonTool icon="paste" lines={['Colar']} w={35} off />
            <SmallTools>{smallIcons.map((s, i) => <button key={i} disabled>{s}</button>)}</SmallTools>
          </GroupRow>
          <GroupName>Área de Transferência</GroupName>
        </Group>
        {groups.map(g => (
          <Group key={g.name}>
            <GroupRow>{g.tools.map(t => <RibbonTool key={t.icon} {...t} />)}</GroupRow>
            <GroupName>{g.name}</GroupName>
          </Group>
        ))}
        <Collapse aria-label="Recolher">
          <svg width="10" height="7" viewBox="0 0 10 7" fill="none" stroke={INK} strokeWidth="1.800"><path d="M1 5.500l4-4 4 4" /></svg>
        </Collapse>
      </Ribbon>

      <Workspace>
        <Rail>{railIcons.map((r, i) => <RailButton key={i}>{r}</RailButton>)}</Rail>

        <Report>
          <Canvas>
            <Matrix>
              <colgroup><Col $w={30} />{months.map(([m, w]) => <Col key={m} $w={w} />)}</colgroup>
              <thead>
                <tr>
                  <th>Ano<svg width="7" height="4" viewBox="0 0 7 4" fill="#fff"><path d="M0 0h7L3.500 4z" /></svg></th>
                  {months.map(([m]) => <th key={m}>{m}</th>)}
                </tr>
              </thead>
              <tbody>
                {rows.map(([year, ...cells]) => (
                  <tr key={year}>
                    <th>{year}</th>
                    {months.map(([m], i) => <td key={m} style={{ backgroundColor: heat(cells[i]) }}>{cells[i]}</td>)}
                  </tr>
                ))}
                <PartialRow><th />{months.map(([m]) => <td key={m} />)}</PartialRow>
              </tbody>
            </Matrix>
            <CanvasScroll><CanvasThumb /></CanvasScroll>
          </Canvas>
          <CanvasFoot />
          <TabBar>
            <DeviceButton $active>
              <svg width="18" height="19" viewBox="0 0 18 19" fill="none" stroke={K} strokeWidth="1.500"><rect x="1.500" y="3" width="14" height="11" rx="2" /><path d="M5 16.500h8M7 14v2M11 14v2" /></svg>
            </DeviceButton>
            <DeviceButton>
              <svg width="12" height="19" viewBox="0 0 12 19" fill="none" stroke={K} strokeWidth="1.400"><rect x="1" y="1.500" width="9.500" height="16.500" rx="2" /><path d="M4 15h3.500" /></svg>
            </DeviceButton>
            <Pager>
              <button aria-label="Anterior"><svg width="6" height="10" viewBox="0 0 6 10" fill="none" stroke="#6a7a80"><path d="M5 1.500v7L1 5z" /></svg></button>
              <button aria-label="Próxima"><svg width="6" height="10" viewBox="0 0 6 10" fill="none" stroke="#6a7a80"><path d="M1 1.500v7L5 5z" /></svg></button>
            </Pager>
            <PageTab>Variação Histórica</PageTab>
            <PageTab $active>Heat Map Mensal</PageTab>
            <AddPage aria-label="Nova página"><svg width="11" height="11" viewBox="0 0 11 11" stroke="#fff" strokeWidth="3"><path d="M5.500 0v11M0 5.500h11" /></svg></AddPage>
          </TabBar>
        </Report>

        <FilterPane>
          <button aria-label="Expandir"><DoubleChevron left /></button>
          <svg width="16" height="12" viewBox="0 0 16 12" stroke="#444" fill="none"><path d="M14.500 1v10M11.500 3v7M8.500 5v4" /></svg>
          <FilterName>Filtros</FilterName>
        </FilterPane>

        <VisualPane>
          <PaneHead><PaneTitle>Visualizações</PaneTitle><button aria-label="Recolher"><DoubleChevron /></button></PaneHead>
          <BuildLabel>Criar visual</BuildLabel>
          <BuildTabs>
            <BuildTab $active aria-label="Criar visual">
              <svg width="26" height="26" viewBox="0 0 26 26" fill={GREEN} stroke={K}><path d="M1 1.500h20" /><path d="M1.500 6.500h23v6h-23zM1.500 17.500h23v6h-23z" strokeWidth="1.500" strokeDasharray="2 1" /></svg>
            </BuildTab>
            <BuildTab aria-label="Formatar página">
              <svg width="26" height="26" viewBox="0 0 26 26" fill="none" stroke="#616161" strokeWidth="1.200"><path d="M8 24.500H2.500V1.500H12l7 7V11M12 1.500v7h7" /><path d="M25 10c-3 1-8 5-10 8l2 2c3-3 7-7 8-10zM13.500 18c-3 0-2 4-5 5.500 3 1.500 7.500 0 7.500-3.500z" /></svg>
            </BuildTab>
          </BuildTabs>
          <Notch><svg width="18" height="8" viewBox="0 0 18 8" fill="none" stroke="#c8c8c8"><path d="M0 7.500h1.500L9 .500l7.500 7H18" /></svg></Notch>
          <Gallery>
            {gallery.map(([name, art]) => (
              <GalleryButton key={name} aria-label={name}><svg width="18" height="18" viewBox="0 0 18 18" fill="none">{art}</svg></GalleryButton>
            ))}
          </Gallery>
          <Wells>
            <WellList>
              <WellTitle>Valores</WellTitle>
              <DropZone>Adicionar os campos de da...</DropZone>
              <WellTitle $bold>Drill-through</WellTitle>
              <SwitchRow>
                <SwitchText>Relatório cruzado</SwitchText>
                <Switch><SwitchInput type="checkbox" role="switch" /></Switch>
              </SwitchRow>
              <SwitchRow>
                <SwitchText>Manter todos os filtros</SwitchText>
                <Switch>
                  <SwitchInput type="checkbox" role="switch" defaultChecked />
                  <svg width="10" height="8" viewBox="0 0 10 8" fill="none" stroke="#fff" strokeWidth="1.400"><path d="M1 4l2.500 2.500L9 1" /></svg>
                </Switch>
              </SwitchRow>
              <DropZone $filled>Adicionar os campos de dr...</DropZone>
            </WellList>
            <WellScroll />
          </Wells>
        </VisualPane>

        <DataPane>
          <PaneHead $edge><PaneTitle>Dados</PaneTitle><button aria-label="Recolher"><DoubleChevron /></button></PaneHead>
          <SearchBox>
            <svg width="14" height="14" viewBox="0 0 14 14" fill="none" stroke="#616161"><circle cx="5.500" cy="5.500" r="5" /><path d="M9 9l4.500 4.500" /></svg>
            <SearchInput placeholder="Pesquisar" aria-label="Pesquisar" />
          </SearchBox>
          <TreeArea>
            <Tree>
              {tables.map(t => (
                <li key={t.name}>
                  <TableRow><Caret open={!!t.fields} /><TableGlyph calc={t.calc} />{t.name}</TableRow>
                  {t.fields && (
                    <Fields>
                      {t.fields.map(([f, kind]) => (
                        <li key={f}>
                          <FieldRow>
                            <Tick type="checkbox" />
                            <FieldIcon>{kind === 'sum' && <SigmaGlyph />}{kind === 'calc' && <CalcColumnGlyph />}</FieldIcon>
                            {f}
                          </FieldRow>
                        </li>
                      ))}
                    </Fields>
                  )}
                </li>
              ))}
            </Tree>
            <TreeScroll />
          </TreeArea>
        </DataPane>
      </Workspace>
    </Page>
  );
}
